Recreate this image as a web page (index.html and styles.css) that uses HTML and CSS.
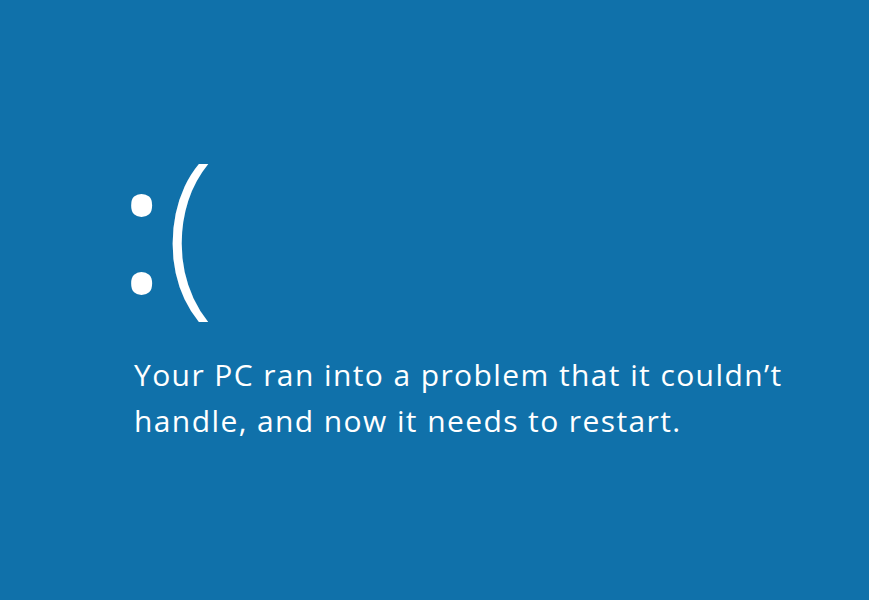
FILE: index.html
```html
<!DOCTYPE html>
<html>
<head>
<meta charset="utf-8">
<link rel="stylesheet" href="styles.css">
</head>
<body>
<main class="screen">
  <div class="face"><span class="eyes">:</span><span class="mouth">(</span></div>
  <p class="message">Your PC ran into a problem that it couldn’t<br>handle, and now it needs to restart.</p>
</main>
</body>
</html>
```
FILE: styles.css
```css
html, body {
  margin: 0;
  padding: 0;
  background: #1071aa;
  height: 100%;
}
.screen {
  padding: 134px 0 0 128px;
  color: #fff;
  font-family: "Open Sans", "Noto Sans", sans-serif;
}
.face {
  display: flex;
  align-items: baseline;
  line-height: 1;
  height: 204px;
  margin-left: -10px;
}
.eyes {
  font-size: 180px;
  font-weight: 400;
}
.mouth {
  font-size: 180px;
  font-weight: 300;
}
.message {
  margin: 14px 0 0 6px;
  font-size: 30px;
  line-height: 46px;
  letter-spacing: 1.4px;
  font-weight: 400;
}
```
